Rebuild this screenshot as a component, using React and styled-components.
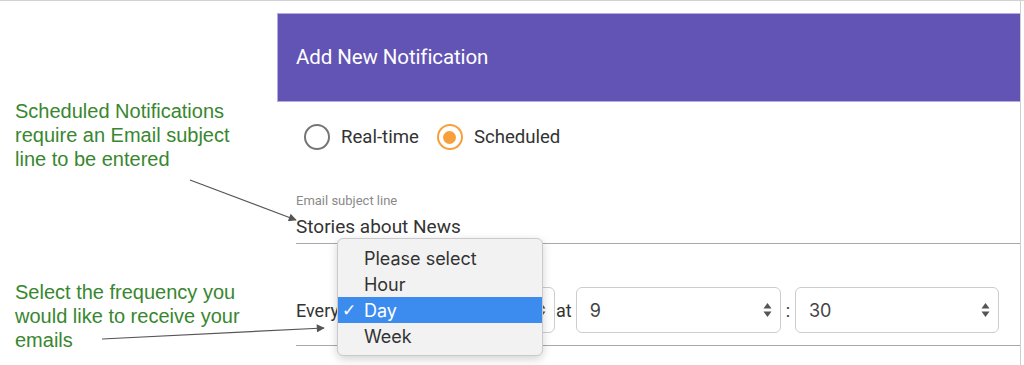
import styled, { createGlobalStyle } from "styled-components";

const Global = createGlobalStyle`
  html, body { margin: 0; padding: 0; background: #fff; }
  body { font-family: Roboto, "Liberation Sans", sans-serif; }
`;

export default function App() {
  return (
    <>
      <Global />
      <Page>
        <Notes>
          <Note top={99}>
            Scheduled Notifications
            <br />
            require an Email subject
            <br />
            line to be entered
          </Note>
          <Note top={110}>
            Select the frequency you
            <br />
            would like to receive your
            <br />
            emails
          </Note>
        </Notes>

        <Panel>
          <Header>Add New Notification</Header>
          <Body>
            <RadioRow>
              <RadioOption>
                <Radio />
                <RadioLabel>Real-time</RadioLabel>
              </RadioOption>
              <RadioOption>
                <Radio checked />
                <RadioLabel>Scheduled</RadioLabel>
              </RadioOption>
            </RadioRow>

            <Field>
              <FieldLabel>Email subject line</FieldLabel>
              <FieldValue>Stories about News</FieldValue>
            </Field>

            <FrequencyRow>
              <Word>Every</Word>
              <SelectWrap>
                <SelectBox width={215}>
                  <span>Day</span>
                  <Spinner />
                </SelectBox>
                <Popup>
                  <Option>
                    <Check />
                    Please select
                  </Option>
                  <Option>
                    <Check />
                    Hour
                  </Option>
                  <Option selected>
                    <Check>✓</Check>
                    Day
                  </Option>
                  <Option>
                    <Check />
                    Week
                  </Option>
                </Popup>
              </SelectWrap>
              <Word gap="0 4px 0 1px">at</Word>
              <SelectBox width={205}>
                <span>9</span>
                <Spinner />
              </SelectBox>
              <Word gap="0 5px 0 5px">:</Word>
              <SelectBox width={204}>
                <span>30</span>
                <Spinner />
              </SelectBox>
            </FrequencyRow>
          </Body>
        </Panel>

        <Arrows width="1024" height="365" viewBox="0 0 1024 365">
          <defs>
            <marker id="head" viewBox="0 0 10 10" refX="9" refY="5" markerWidth="11" markerHeight="8" orient="auto" markerUnits="userSpaceOnUse">
              <path d="M0 0 L10 5 L0 10 z" fill="#555" />
            </marker>
          </defs>
          <line x1="190" y1="179" x2="296" y2="219" stroke="#555" strokeWidth="1.2" markerEnd="url(#head)" />
          <line x1="102" y1="338" x2="324" y2="327" stroke="#555" strokeWidth="1.2" markerEnd="url(#head)" />
        </Arrows>
      </Page>
    </>
  );
}

function Spinner() {
  return (
    <svg width="9" height="16" viewBox="0 0 9 16">
      <path d="M4.5 1 L8.5 6.5 L0.5 6.5 z" fill="#555" />
      <path d="M4.5 15 L8.5 9.5 L0.5 9.5 z" fill="#555" />
    </svg>
  );
}

const Page = styled.div`
  position: relative;
  width: 1024px;
  height: 365px;
  border-top: 1px solid #d2d2d2;
  box-sizing: border-box;
  display: flex;
  overflow: hidden;
`;

const Notes = styled.div`
  width: 277px;
  flex-shrink: 0;
  display: flex;
  flex-direction: column;
`;

const Note = styled.div`
  margin-top: ${({ top }) => top - 1}px;
  padding-left: 15px;
  font-family: "Liberation Sans", Arial, sans-serif;
  font-size: 20px;
  line-height: 24px;
  color: #38872f;
`;

const Panel = styled.div`
  width: 744px;
  flex-shrink: 0;
  border-right: 1px solid #cfcfcf;
  box-sizing: border-box;
  padding-top: 12px;
`;

const Header = styled.div`
  height: 89px;
  box-sizing: border-box;
  background: #6254b5;
  border: 1px solid #b4acdf;
  border-right: none;
  display: flex;
  align-items: center;
  padding-left: 18px;
  padding-bottom: 2px;
  color: #fff;
  font-size: 20.5px;
  letter-spacing: -0.1px;
`;

const Body = styled.div`
  padding-left: 19px;
`;

const RadioRow = styled.div`
  display: flex;
  align-items: center;
  gap: 18px;
  margin-top: 22px;
  padding-left: 8px;
`;

const RadioOption = styled.label`
  display: flex;
  align-items: center;
  gap: 11px;
`;

const Radio = styled.span`
  width: 26px;
  height: 26px;
  box-sizing: border-box;
  border-radius: 50%;
  border: 2.5px solid ${({ checked }) => (checked ? "#f7a03b" : "#767676")};
  display: flex;
  align-items: center;
  justify-content: center;

  &::after {
    content: "";
    display: ${({ checked }) => (checked ? "block" : "none")};
    width: 13px;
    height: 13px;
    border-radius: 50%;
    background: #f7a03b;
  }
`;

const RadioLabel = styled.span`
  font-size: 18.6px;
  color: #333;
`;

const Field = styled.div`
  margin-top: 43px;
  border-bottom: 1px solid #a8a8a8;
  padding-bottom: 5px;
`;

const FieldLabel = styled.div`
  font-size: 13px;
  color: #8a8a8a;
  line-height: 16px;
`;

const FieldValue = styled.div`
  margin-top: 7px;
  font-size: 19px;
  line-height: 22px;
  color: #333;
`;

const FrequencyRow = styled.div`
  display: flex;
  align-items: center;
  margin-top: 43px;
  padding-bottom: 12px;
  border-bottom: 1px solid #a8a8a8;
`;

const Word = styled.span`
  font-size: 18px;
  color: #333;
  margin: ${({ gap }) => gap || "0"};
`;

const SelectWrap = styled.div`
  position: relative;
  margin-left: 1px;
`;

const SelectBox = styled.div`
  width: ${({ width }) => width}px;
  height: 46px;
  box-sizing: border-box;
  border: 1px solid #cdcdcd;
  border-radius: 6px;
  background: #fff;
  display: flex;
  align-items: center;
  justify-content: space-between;
  padding: 0 8px 0 13px;
  font-family: Inter, "Liberation Sans", sans-serif;
  font-size: 18px;
  color: #444;
`;

const Popup = styled.div`
  position: absolute;
  left: -3px;
  top: -49px;
  width: 206px;
  box-sizing: border-box;
  padding: 6px 0;
  background: #f2f2f2;
  border: 1px solid #cacaca;
  border-radius: 6px;
  box-shadow: 0 3px 10px rgba(0, 0, 0, 0.18);
  font-family: Inter, "Liberation Sans", sans-serif;
`;

const Option = styled.div`
  height: 26px;
  display: flex;
  align-items: center;
  padding-left: 4px;
  font-size: 18px;
  color: ${({ selected }) => (selected ? "#fff" : "#333")};
  background: ${({ selected }) => (selected ? "#3c8cf0" : "transparent")};
`;

const Check = styled.span`
  width: 22px;
  flex-shrink: 0;
  font-family: "DejaVu Sans", sans-serif;
  font-size: 17px;
  font-weight: bold;
`;

const Arrows = styled.svg`
  position: absolute;
  left: 0;
  top: 0;
  pointer-events: none;
`;
